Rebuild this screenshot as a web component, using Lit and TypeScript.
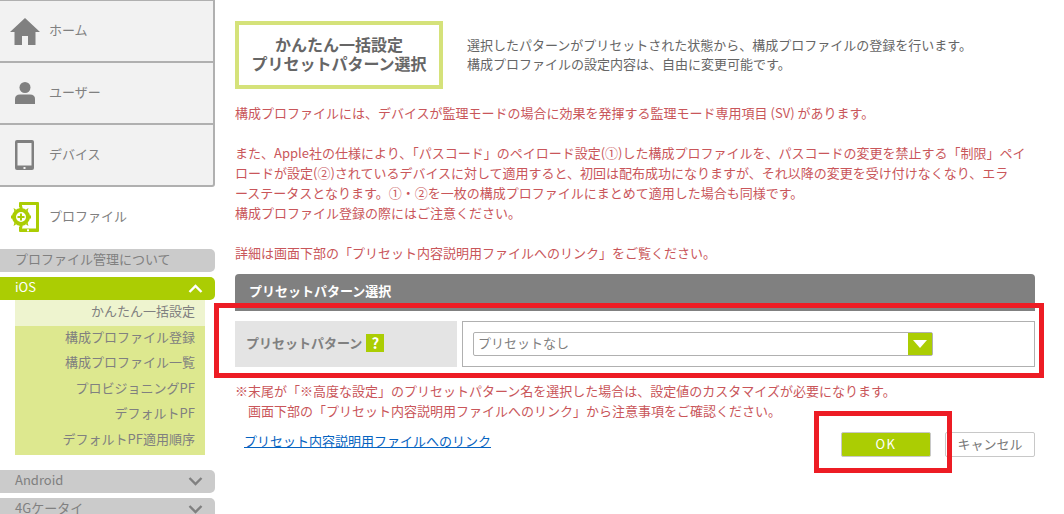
import { LitElement, html, css } from "lit";
import { customElement } from "lit/decorators.js";

const chevron = (up: boolean, color: string) => html`<svg class="chev" width="15" height="9" viewBox="0 0 15 9"><path d=${up ? "M1.5 8 L7.5 2 L13.5 8" : "M1.5 1 L7.5 7 L13.5 1"} fill="none" stroke=${color} stroke-width="2.4"/></svg>`;

const sub = ["かんたん一括設定", "構成プロファイル登録", "構成プロファイル一覧", "プロビジョニングPF", "デフォルトPF", "デフォルトPF適用順序"];

@customElement("app-root")
export class AppRoot extends LitElement {
  static styles = css`
    :host { display: block; position: relative; width: 1064px; height: 514px; overflow: hidden; background: #fff;
      font-family: "Noto Sans CJK JP", "Noto Sans", sans-serif; font-size: 13px; font-weight: 400; color: #666; }
    .page { display: flex; height: 514px; }
    .side { width: 215px; flex: none; }
    .t { margin-bottom: 4px; }
    .topnav { border-top: 1px solid #b0b0b0; border-right: 2px solid #b0b0b0; border-bottom: 2px solid #b0b0b0; border-bottom-right-radius: 3px; background: #f2f2f2; box-sizing: border-box; height: 187px; }
    .nav { display: flex; align-items: center; height: 60px; color: #808080; font-size: 13px; }
    .nav + .nav { border-top: 2px solid #b0b0b0; }
    .ico { width: 49px; flex: none; display: flex; justify-content: center; box-sizing: border-box; }
    .prof { display: flex; align-items: center; height: 60px; color: #808080; }
    .pill { height: 23px; background: #cbcbcb; border-radius: 0 5px 5px 0; display: flex; align-items: center; justify-content: space-between; padding: 0 12px 0 15px; color: #808080; margin-top: 2px; }
    .pill.on { background: #abcd03; color: #fff; margin-top: 5px; }
    .pill.a { margin-top: 15px; }
    .pill.b { margin-top: 5px; }
    .subm { margin: 0 10px 0 15px; background: #dde88f; padding-bottom: 1px; }
    .subm div { height: 25.6px; line-height: 22px; text-align: right; padding-right: 10px; color: #808080; }
    .subm div.cur { background: #eef4cf; }
    .main { flex: 1; padding: 21px 29px 0 20px; min-width: 0; }
    .head { display: flex; align-items: center; gap: 24px; }
    .title { width: 208px; height: 68px; box-sizing: border-box; border: 4px solid #d5e27a; padding-bottom: 2px; display: flex; align-items: center; justify-content: center; text-align: center; font-weight: 700; font-size: 16px; line-height: 19px; color: #666; }
    .desc { line-height: 19.5px; color: #666; font-size: 13px; margin-top: -2px; }
    .red { color: #c9565a; font-size: 13px; line-height: 20px; margin-top: 14px; white-space: nowrap; }
    .sec { margin-top: 11px; height: 37px; background: #808080; border-radius: 4px 4px 0 0; color: #fff; font-weight: 700; font-size: 13px; display: flex; align-items: center; padding-left: 14px; }
    .row { display: flex; gap: 5px; margin-top: 10px; height: 46px; }
    .lab { width: 222px; background: #e4e4e4; display: flex; align-items: center; padding-left: 11px; box-sizing: border-box; color: #808080; font-weight: 700; font-size: 13px; gap: 4px; }
    .q { width: 18px; height: 18px; margin-bottom: 2px; background: #abcd03; color: #fff; font-weight: 700; font-size: 15px; line-height: 17px; text-align: center; }
    .val { flex: 1; border: 1px solid #b0b0b0; display: flex; align-items: center; padding-left: 10px; }
    .sel { width: 460px; height: 24px; box-sizing: border-box; border: 1px solid #b0b0b0; border-radius: 2px; display: flex; align-items: center; justify-content: space-between; color: #808080; padding-left: 4px; }
    .arr { width: 24px; height: 22px; background: #abcd03; display: flex; align-items: center; justify-content: center; }
    .notes { color: #c9565a; font-size: 13px; line-height: 20px; margin-top: 14px; white-space: nowrap; }
    .notes .i { padding-left: 13px; }
    .foot { display: flex; align-items: flex-start; margin-top: 8px; }
    .link { color: #0563c1; text-decoration: underline; margin: 2px 0 0 9px; font-size: 13px; line-height: 20px; flex: 1; }
    .btn { width: 90px; height: 25px; box-sizing: border-box; border: 1px solid #c8c8c8; border-radius: 2px; display: flex; align-items: center; justify-content: center; margin-top: 3px; padding-bottom: 3px; }
    .ok { background: #abcd03; color: #fff; letter-spacing: 1.5px; margin-right: 14px; }
    .cancel { background: #fff; color: #777; font-size: 13px; }
    .mark { position: absolute; border: 5px solid #ed1c24; box-sizing: border-box; pointer-events: none; }
    .m1 { left: 214px; top: 303px; width: 830px; height: 75px; }
    .m2 { left: 814px; top: 411px; width: 138px; height: 62px; }
  `;

  render() {
    return html`
      <div class="page">
        <aside class="side">
          <div class="topnav">
            <div class="nav"><span class="ico"><svg width="30" height="27" viewBox="0 0 30 27"><path d="M15 0 L30 14 H25.5 V27 H18 V18 H12 V27 H4.5 V14 H0 Z" fill="#808080"/></svg></span><span class="t">ホーム</span></div>
            <div class="nav"><span class="ico"><svg width="22" height="22" viewBox="0 0 22 22"><circle cx="11" cy="5.5" r="5.5" fill="#808080"/><path d="M1 22 V17 Q1 12.5 6 12.5 H16 Q21 12.5 21 17 V22 Z" fill="#808080"/></svg></span><span class="t">ユーザー</span></div>
            <div class="nav"><span class="ico"><svg width="19" height="30" viewBox="0 0 19 30"><rect x="0" y="0" width="19" height="30" rx="2" fill="#808080"/><rect x="2.5" y="3" width="14" height="22.5" fill="#f2f2f2"/><rect x="8.5" y="27" width="2" height="2" fill="#f2f2f2"/></svg></span><span class="t">デバイス</span></div>
          </div>
          <div class="prof"><span class="ico"><svg width="28" height="30" viewBox="0 0 28 30"><path d="M9 0 H27 Q28 0 28 1 V29 Q28 30 27 30 H9 Q8 30 8 29 V25 H11 V26.500 H25 V3 H11 V5 H8 V1 Q8 0 9 0 Z" fill="#abcd03"/><rect x="16" y="27.300" width="2" height="2" fill="#fff"/><circle cx="10" cy="15" r="7" fill="none" stroke="#abcd03" stroke-width="4"/><path d="M8.500 4.500 H11.500 V8 H8.500 Z M8.500 22 H11.500 V25.500 H8.500 Z M0 13.500 H3.500 V16.500 H0 Z M16.500 13.500 H20 V16.500 H16.500 Z M2.500 6 L5 7.500 L3.500 9.500 Z M17.500 6 L15 7.500 L16.500 9.500 Z M2.500 24 L5 22.500 L3.500 20.500 Z M17.500 24 L15 22.500 L16.500 20.500 Z" fill="#abcd03"/><path d="M9 11.500 H11 V14 H13.500 V16 H11 V18.500 H9 V16 H6.500 V14 H9 Z" fill="#abcd03"/></svg></span><span class="t">プロファイル</span></div>
          <div class="pill"><span class="t">プロファイル管理について</span></div>
          <div class="pill on"><span class="t">iOS</span>${chevron(true, "#fff")}</div>
          <div class="subm">${sub.map((s, i) => html`<div class=${i === 0 ? "cur" : ""}>${s}</div>`)}</div>
          <div class="pill a"><span class="t">Android</span>${chevron(false, "#808080")}</div>
          <div class="pill b"><span class="t">4Gケータイ</span>${chevron(false, "#808080")}</div>
        </aside>
        <main class="main">
          <div class="head">
            <div class="title">かんたん一括設定<br />プリセットパターン選択</div>
            <div class="desc">選択したパターンがプリセットされた状態から、構成プロファイルの登録を行います。<br />構成プロファイルの設定内容は、自由に変更可能です。</div>
          </div>
          <div class="red">構成プロファイルには、デバイスが監理モードの場合に効果を発揮する監理モード専用項目 (SV) があります。<br /><br />また、Apple社の仕様により、「パスコード」のペイロード設定(①)した構成プロファイルを、パスコードの変更を禁止する「制限」ペイ<br />ロードが設定(②)されているデバイスに対して適用すると、初回は配布成功になりますが、それ以降の変更を受け付けなくなり、エラ<br />ーステータスとなります。①・②を一枚の構成プロファイルにまとめて適用した場合も同様です。<br />構成プロファイル登録の際にはご注意ください。<br /><br />詳細は画面下部の「プリセット内容説明用ファイルへのリンク」をご覧ください。</div>
          <div class="sec"><span class="t">プリセットパターン選択</span></div>
          <div class="row">
            <div class="lab"><span class="t">プリセットパターン</span><span class="q">?</span></div>
            <div class="val"><div class="sel"><span class="t">プリセットなし</span><span class="arr"><svg width="14" height="8" viewBox="0 0 14 8"><path d="M0 0 H14 L7 8 Z" fill="#fff"/></svg></span></div></div>
          </div>
          <div class="notes">※末尾が「※高度な設定」のプリセットパターン名を選択した場合は、設定値のカスタマイズが必要になります。<br /><span class="i">画面下部の「プリセット内容説明用ファイルへのリンク」から注意事項をご確認ください。</span></div>
          <div class="foot">
            <span class="link">プリセット内容説明用ファイルへのリンク</span>
            <div class="btn ok">OK</div>
            <div class="btn cancel">キャンセル</div>
          </div>
        </main>
      </div>
      <div class="mark m1"></div>
      <div class="mark m2"></div>
    `;
  }
}
